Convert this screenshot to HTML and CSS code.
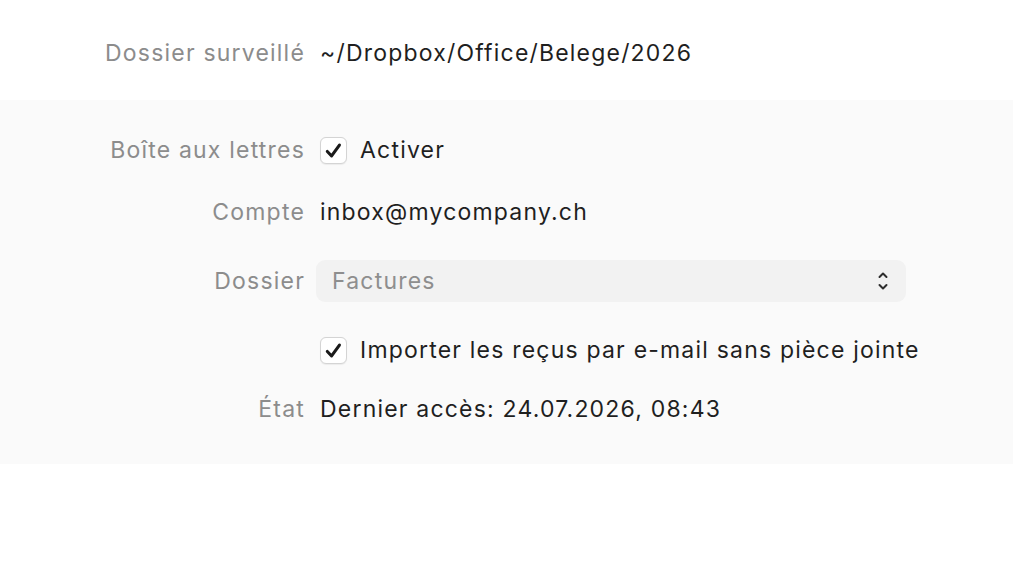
FILE: index.html
```html
<!DOCTYPE html>
<html lang="fr">
<head>
<meta charset="utf-8">
<title>Réglages</title>
<link rel="stylesheet" href="styles.css">
</head>
<body>
  <section class="panel panel-top">
    <div class="row">
      <span class="label">Dossier surveillé</span>
      <span class="value">~/Dropbox/Office/Belege/2026</span>
    </div>
  </section>

  <section class="panel panel-mail">
    <div class="row row-enable">
      <span class="label">Boîte aux lettres</span>
      <label class="check">
        <span class="box">
          <svg viewBox="0 0 16 16" width="16" height="16"><path d="M2.8 8.8 L6.4 12.6 L13 3.4" fill="none" stroke="#1a1a1a" stroke-width="2.6" stroke-linecap="round" stroke-linejoin="round"/></svg>
        </span>
        <span class="value">Activer</span>
      </label>
    </div>
    <div class="row row-account">
      <span class="label">Compte</span>
      <span class="value">inbox@mycompany.ch</span>
    </div>
    <div class="row row-folder">
      <span class="label">Dossier</span>
      <div class="popup">
        <span class="popup-text">Factures</span>
        <svg class="popup-arrows" viewBox="0 0 10 22" width="10" height="22"><path d="M1.5 7 L5 3.5 L8.5 7 M1.5 15 L5 18.5 L8.5 15" fill="none" stroke="#2e2e2e" stroke-width="2" stroke-linecap="round" stroke-linejoin="round"/></svg>
      </div>
    </div>
    <div class="row row-import">
      <span class="label"></span>
      <label class="check">
        <span class="box">
          <svg viewBox="0 0 16 16" width="16" height="16"><path d="M2.8 8.8 L6.4 12.6 L13 3.4" fill="none" stroke="#1a1a1a" stroke-width="2.6" stroke-linecap="round" stroke-linejoin="round"/></svg>
        </span>
        <span class="value">Importer les reçus par e-mail sans pièce jointe</span>
      </label>
    </div>
    <div class="row row-state">
      <span class="label">État</span>
      <span class="value">Dernier accès: 24.07.2026, 08:43</span>
    </div>
  </section>
</body>
</html>
```

FILE: styles.css
```css
html, body {
  margin: 0;
  padding: 0;
  background: #ffffff;
}

body {
  font-family: Inter, "Noto Sans", "Liberation Sans", sans-serif;
  font-size: 23px;
  letter-spacing: 1.2px;
  color: #1f1f1f;
  -webkit-font-smoothing: antialiased;
}

.panel-top {
  height: 100px;
  padding-top: 32px;
  box-sizing: border-box;
}

.panel-mail {
  height: 364px;
  box-sizing: border-box;
  padding-top: 29px;
  background: #fafafa;
  display: flex;
  flex-direction: column;
}

.row {
  display: grid;
  grid-template-columns: 305px 1fr;
  column-gap: 15px;
  align-items: center;
  height: 42px;
}

.row-account { margin-top: 20px; }
.row-folder  { margin-top: 27px; }
.row-import  { margin-top: 27px; }
.row-state   { margin-top: 17px; }

.label {
  text-align: right;
  color: #8c8c8c;
  white-space: nowrap;
}

.value {
  color: #1f1f1f;
  white-space: nowrap;
}

.check {
  display: flex;
  align-items: center;
  gap: 13px;
}

.box {
  width: 27px;
  height: 27px;
  box-sizing: border-box;
  border: 1px solid #d4d4d4;
  border-radius: 6px;
  background: #ffffff;
  display: flex;
  align-items: center;
  justify-content: center;
  box-shadow: 0 0.5px 1px rgba(0, 0, 0, 0.06);
}

.box svg {
  width: 19px;
  height: 19px;
}

.popup {
  margin-left: -4px;
  width: 590px;
  height: 42px;
  box-sizing: border-box;
  border-radius: 9px;
  background: #f2f2f2;
  display: flex;
  align-items: center;
  justify-content: space-between;
  padding: 0 18px 0 16px;
}

.popup-text {
  color: #8e8e8e;
}
```
